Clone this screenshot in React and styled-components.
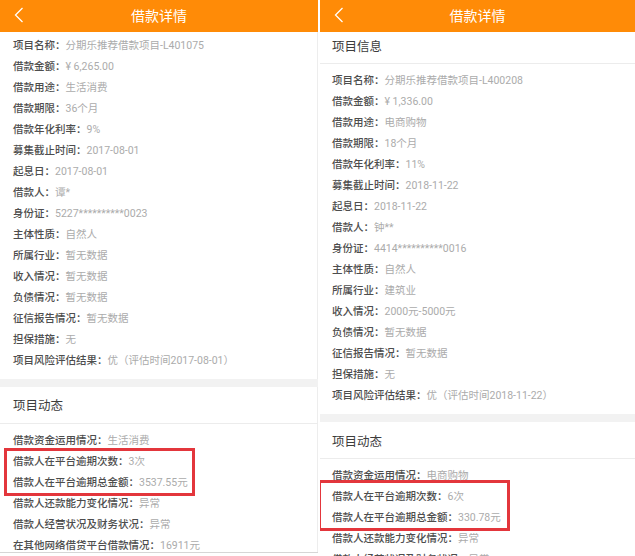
import React from 'react';
import styled, { createGlobalStyle } from 'styled-components';

const GlobalStyle = createGlobalStyle`
  html, body {
    margin: 0;
    padding: 0;
    background: #fff;
  }
  body {
    font-family: Roboto, "Noto Sans CJK SC", sans-serif;
  }
`;

const Page = styled.div`
  display: flex;
  gap: 2px;
  width: 635px;
  height: 556px;
  overflow: hidden;
  background: #fff;
`;

const Panel = styled.div`
  display: flex;
  flex-direction: column;
  width: ${(p) => p.$width}px;
  height: ${(p) => (p.$footerLine ? 552 : 556)}px;
  flex-shrink: 0;
  overflow: hidden;
  border-bottom: ${(p) => (p.$footerLine ? '1px solid #d6d6d6' : 'none')};
  box-shadow: ${(p) => (p.$edge ? 'inset -1px 0 0 #ededed' : 'none')};
`;

const Header = styled.div`
  display: flex;
  align-items: center;
  justify-content: center;
  position: relative;
  height: 32px;
  flex-shrink: 0;
  background: #ff8b07;
  color: #fff;
  font-size: 14px;
  padding-bottom: 3px;
  box-sizing: border-box;
`;

const Back = styled.svg`
  position: absolute;
  left: 14px;
  top: 7px;
`;

const Body = styled.div`
  flex: 1;
  overflow: hidden;
`;

const Content = styled.div`
  margin-top: ${(p) => -p.$scroll}px;
`;

const SectionTitle = styled.div`
  display: flex;
  align-items: center;
  height: 36px;
  padding: 0 ${(p) => p.$pad}px;
  border-bottom: 1px solid #ececec;
  font-size: 12.5px;
  color: #3c3c3c;
`;

const List = styled.div`
  padding: 6px ${(p) => p.$pad}px 8px;
`;

const Row = styled.div`
  height: 21px;
  line-height: 21px;
  font-size: 10.5px;
  white-space: nowrap;
`;

const Label = styled.span`
  color: #4d4d4d;
  font-weight: 500;
`;

const Value = styled.span`
  color: #ababab;
`;

const Band = styled.div`
  height: 8px;
  background: #f2f2f2;
`;

const Highlight = styled.div`
  width: ${(p) => p.$width}px;
  margin-left: ${(p) => -p.$inset}px;
  padding-left: ${(p) => p.$inset}px;
  margin-top: ${(p) => -p.$lift}px;
  padding-top: ${(p) => p.$lift}px;
  box-sizing: border-box;
  box-shadow: 0 0 0 3px #e3363c;
`;

const left = {
  width: 318,
  pad: 13,
  scroll: 40.5,
  hl: { width: 185, inset: 6, lift: 0 },
  info: [
    ['项目名称：', '分期乐推荐借款项目-L401075'],
    ['借款金额：', '¥ 6,265.00'],
    ['借款用途：', '生活消费'],
    ['借款期限：', '36个月'],
    ['借款年化利率：', '9%'],
    ['募集截止时间：', '2017-08-01'],
    ['起息日：', '2017-08-01'],
    ['借款人：', '谭*'],
    ['身份证：', '5227**********0023'],
    ['主体性质：', '自然人'],
    ['所属行业：', '暂无数据'],
    ['收入情况：', '暂无数据'],
    ['负债情况：', '暂无数据'],
    ['征信报告情况：', '暂无数据'],
    ['担保措施：', '无'],
    ['项目风险评估结果：', '优（评估时间2017-08-01）'],
  ],
  dynamic: [
    ['借款资金运用情况：', '生活消费'],
    ['借款人在平台逾期次数：', '3次'],
    ['借款人在平台逾期总金额：', '3537.55元'],
    ['借款人还款能力变化情况：', '异常'],
    ['借款人经营状况及财务状况：', '异常'],
    ['在其他网络借贷平台借款情况：', '16911元'],
  ],
};

const right = {
  width: 315,
  pad: 12,
  scroll: 5,
  hl: { width: 186, inset: 11, lift: 3 },
  info: [
    ['项目名称：', '分期乐推荐借款项目-L400208'],
    ['借款金额：', '¥ 1,336.00'],
    ['借款用途：', '电商购物'],
    ['借款期限：', '18个月'],
    ['借款年化利率：', '11%'],
    ['募集截止时间：', '2018-11-22'],
    ['起息日：', '2018-11-22'],
    ['借款人：', '钟**'],
    ['身份证：', '4414**********0016'],
    ['主体性质：', '自然人'],
    ['所属行业：', '建筑业'],
    ['收入情况：', '2000元-5000元'],
    ['负债情况：', '暂无数据'],
    ['征信报告情况：', '暂无数据'],
    ['担保措施：', '无'],
    ['项目风险评估结果：', '优（评估时间2018-11-22）'],
  ],
  dynamic: [
    ['借款资金运用情况：', '电商购物'],
    ['借款人在平台逾期次数：', '6次'],
    ['借款人在平台逾期总金额：', '330.78元'],
    ['借款人还款能力变化情况：', '异常'],
    ['借款人经营状况及财务状况：', '异常'],
  ],
};

const Item = ({ item }) => (
  <Row>
    <Label>{item[0]}</Label>
    <Value>{item[1]}</Value>
  </Row>
);

const Detail = ({ data, footerLine, edge }) => (
  <Panel $width={data.width} $footerLine={footerLine} $edge={edge}>
    <Header>
      <Back width="10" height="16" viewBox="0 0 10 16">
        <polyline points="8.5,1 1.5,8 8.5,15" fill="none" stroke="#fff" strokeWidth="1.3" />
      </Back>
      借款详情
    </Header>
    <Body>
      <Content $scroll={data.scroll}>
        <SectionTitle $pad={data.pad}>项目信息</SectionTitle>
        <List $pad={data.pad}>
          {data.info.map((it) => (
            <Item key={it[0]} item={it} />
          ))}
        </List>
        <Band />
        <SectionTitle $pad={data.pad}>项目动态</SectionTitle>
        <List $pad={data.pad}>
          <Item item={data.dynamic[0]} />
          <Highlight $width={data.hl.width} $inset={data.hl.inset} $lift={data.hl.lift}>
            <Item item={data.dynamic[1]} />
            <Item item={data.dynamic[2]} />
          </Highlight>
          {data.dynamic.slice(3).map((it) => (
            <Item key={it[0]} item={it} />
          ))}
        </List>
      </Content>
    </Body>
  </Panel>
);

export default function App() {
  return (
    <>
      <GlobalStyle />
      <Page>
        <Detail data={left} footerLine edge />
        <Detail data={right} />
      </Page>
    </>
  );
}
